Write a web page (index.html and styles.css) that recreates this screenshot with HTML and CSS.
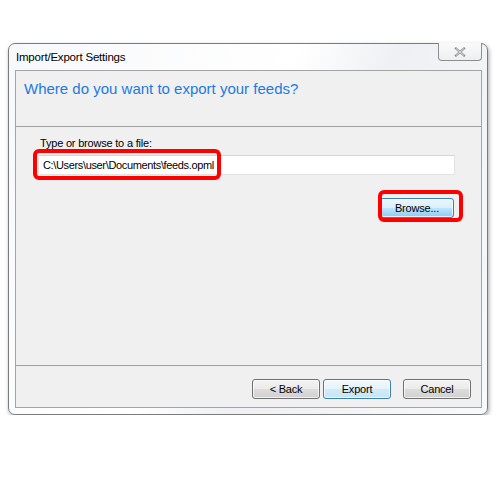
FILE: index.html
```html
<!DOCTYPE html>
<html lang="en">
  <head>
    <meta charset="utf-8">
    <title>Import/Export Settings</title>
    <link rel="stylesheet" href="styles.css">
  </head>
  <body>
    <div class="window">
      <div class="titlebar">
        <span class="title">Import/Export Settings</span>
        <button class="close" aria-label="Close">
          <svg width="14" height="10" viewBox="0 0 14 10">
            <path d="M3 1.5 L11 8.5 M11 1.5 L3 8.5" stroke="#8a8a8a" stroke-width="2.2" stroke-linecap="square" fill="none"/>
            <path d="M3 1.5 L11 8.5 M11 1.5 L3 8.5" stroke="#f4f4f4" stroke-width="0.8" fill="none"/>
          </svg>
        </button>
      </div>
      <div class="client">
        <div class="header">
          <h1>Where do you want to export your feeds?</h1>
        </div>
        <div class="content">
          <label class="label">Type or browse to a file:</label>
          <div class="field">C:\Users\user\Documents\feeds.opml</div>
          <div class="browse-row">
            <button class="btn btn-hot">Browse...</button>
          </div>
          <span class="mark mark-path"></span>
          <span class="mark mark-browse"></span>
        </div>
        <div class="footer">
          <button class="btn">&lt; Back</button>
          <button class="btn btn-default">Export</button>
          <button class="btn btn-cancel">Cancel</button>
        </div>
      </div>
    </div>
  </body>
</html>
```

FILE: styles.css
```css
html, body {
  margin: 0;
  padding: 0;
}
body {
  background: #fff;
  font-family: "Liberation Sans", Arial, sans-serif;
  font-size: 11px;
  letter-spacing: -0.2px;
  color: #000;
}
.window {
  margin: 43px 0 0 8px;
  width: 480px;
  height: 372px;
  border: 1px solid #7b7b7b;
  border-radius: 7px;
  background: linear-gradient(115deg, #f7f8fa 0%, #ffffff 45%, #eef0f3 60%, #f8f9fb 100%);
  box-shadow: 1px 2px 4px rgba(0, 0, 0, 0.35);
  display: flex;
  flex-direction: column;
  padding: 0 5px 6px 6px;
  box-sizing: border-box;
}
.titlebar {
  height: 26px;
  display: flex;
  justify-content: space-between;
  align-items: flex-start;
}
.title {
  padding: 7px 0 0 1px;
  font-size: 11.5px;
  color: #000;
}
.close {
  width: 44px;
  height: 18px;
  margin: -1px 0 0 0;
  padding: 0;
  border: 1px solid #8e8e8e;
  border-top: none;
  border-radius: 0 0 4px 4px;
  background: linear-gradient(#fbfbfb, #eceef0);
  display: flex;
  align-items: center;
  justify-content: center;
}
.client {
  flex: 1;
  border: 1px solid #a4a4a4;
  background: #f0f0f0;
  display: flex;
  flex-direction: column;
}
.header {
  height: 55px;
  border-bottom: 1px solid #a0a0a0;
  background: #f0f0f0;
}
h1 {
  margin: 0;
  padding: 9px 0 0 8px;
  font-size: 15px;
  letter-spacing: 0;
  font-weight: normal;
  color: #1e7ae0;
}
.content {
  flex: 1;
  position: relative;
  padding: 9px 26px 0 22px;
}
.label {
  display: block;
  padding-left: 2px;
  line-height: 14px;
  margin-bottom: 5px;
}
.field {
  height: 20px;
  line-height: 19px;
  background: #fff;
  border: 1px solid #e2e2e2;
  border-top-color: #d6d6d6;
  padding-left: 4px;
  letter-spacing: -0.35px;
  box-sizing: border-box;
}
.browse-row {
  display: flex;
  justify-content: flex-end;
  padding: 23px 1px 0 0;
}
.btn {
  width: 68px;
  height: 20px;
  padding: 0;
  border: 1px solid #707070;
  border-radius: 3px;
  background: linear-gradient(#f3f3f3 0%, #ebebeb 49%, #dddddd 50%, #d0d0d0 100%);
  box-shadow: inset 0 0 0 1px rgba(255, 255, 255, 0.7);
  font-family: "Liberation Sans", Arial, sans-serif;
  font-size: 11px;
  letter-spacing: -0.2px;
  color: #000;
}
.btn-hot {
  width: 74px;
  border-color: #3c7fb1;
  background: linear-gradient(#eaf6fd 0%, #d9f0fc 49%, #bee6fd 50%, #8fcaee 100%);
}
.btn-default {
  border-color: #3c7fb1;
  background: linear-gradient(#f1f9fe 0%, #e4f3fc 49%, #d2ebfa 50%, #c6e4f6 100%);
}
.mark {
  position: absolute;
  border: 4px solid #ff0000;
  border-radius: 6px;
  box-sizing: border-box;
}
.mark-path {
  left: 17px;
  top: 22px;
  width: 188px;
  height: 31px;
}
.mark-browse {
  left: 362px;
  top: 63px;
  width: 85px;
  height: 32px;
}
.footer {
  height: 42px;
  border-top: 1px solid #a0a0a0;
  display: flex;
  justify-content: flex-end;
  align-items: flex-start;
  padding: 13px 10px 0 0;
  box-sizing: border-box;
  gap: 3px;
}
.btn-cancel {
  margin-left: 9px;
}
```
